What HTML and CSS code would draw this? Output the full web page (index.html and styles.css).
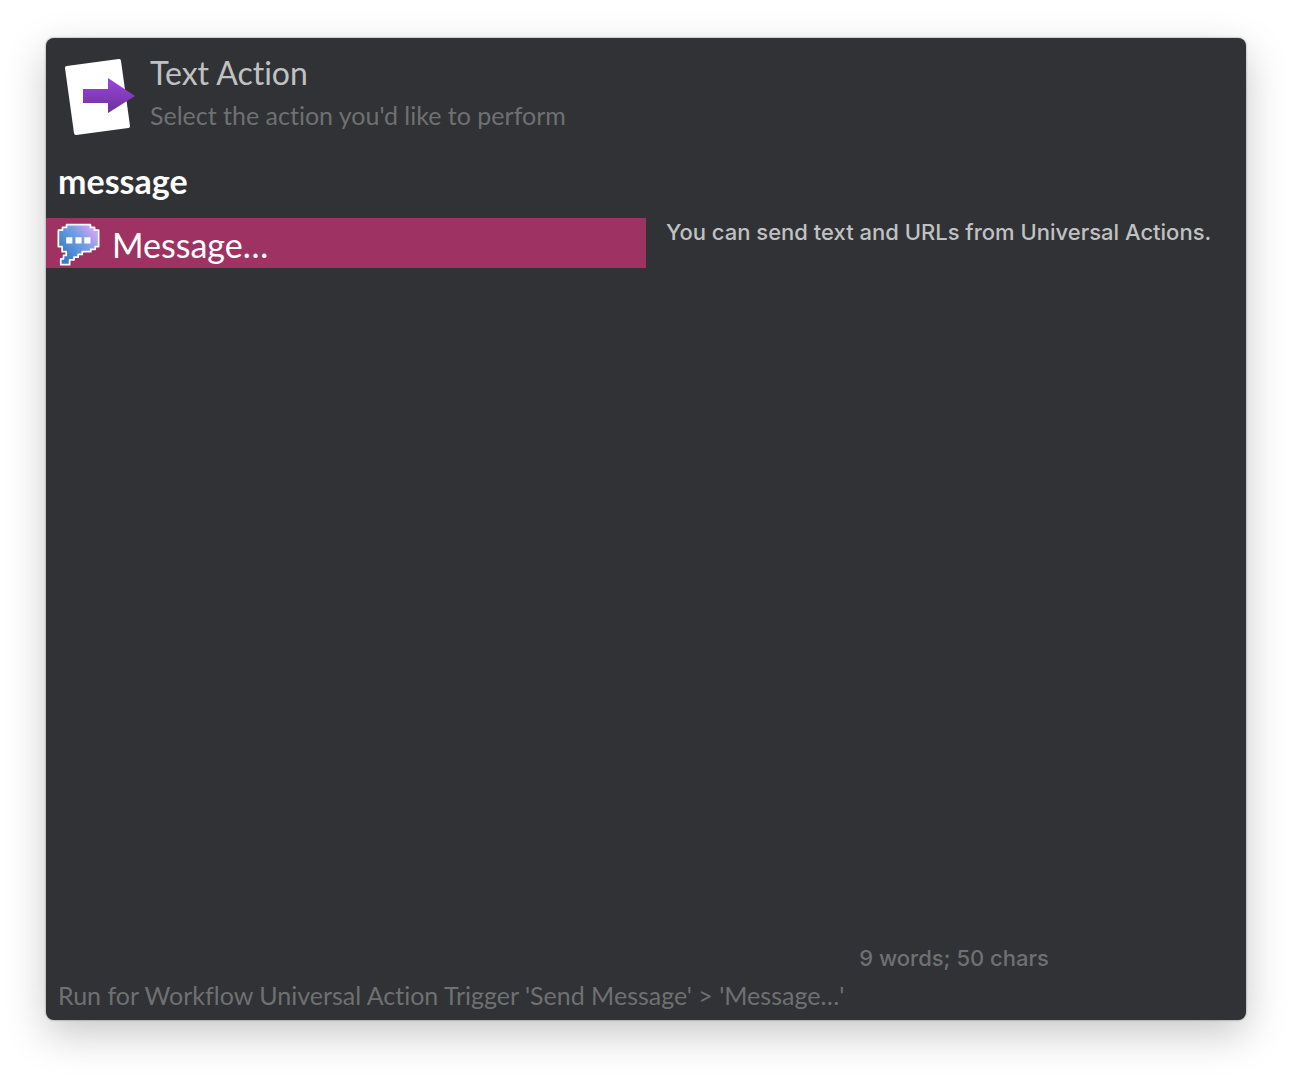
FILE: index.html
```html
<!DOCTYPE html>
<html lang="en">

<head>
    <meta charset="UTF-8">
    <meta name="viewport" content="width=device-width, initial-scale=1.0">
    <title>Text Action</title>
    <link rel="stylesheet" href="styles.css">
</head>

<body>
    <main class="window">
        <header class="header">
            <svg class="action-icon" viewBox="0 0 72 78" aria-hidden="true">
                <defs>
                    <linearGradient id="arrowFill" x1="0" y1="0" x2="0" y2="1">
                        <stop offset="0" stop-color="#9b45e0" />
                        <stop offset="1" stop-color="#6c3197" />
                    </linearGradient>
                </defs>
                <path class="sheet" d="M3 9 L55 2 L64 67 L12 74 Z" />
                <path fill="url(#arrowFill)" d="M19 30 H44 V19 L71 37 L44 54 V44 H19 Z" />
            </svg>
            <div>
                <h1>Text Action</h1>
                <p>Select the action you'd like to perform</p>
            </div>
        </header>

        <input class="search" type="text" value="message" aria-label="Search actions">

        <div class="content">
            <ul class="results">
                <li>
                    <button class="result" type="button">
                        <svg class="result-icon" viewBox="0 0 126 126" aria-hidden="true">
                            <defs>
                                <linearGradient id="bubbleFill" x1="0.1" y1="0.8" x2="0.9" y2="0.2">
                                    <stop offset="0" stop-color="#357bc8" />
                                    <stop offset="0.55" stop-color="#6a9ce3" />
                                    <stop offset="1" stop-color="#c9a3f2" />
                                </linearGradient>
                            </defs>
                            <path class="bubble" fill="url(#bubbleFill)" d="M28 5 H98 V13 H110 V21 H122 V69 H112 V77 H99 V84 H74 V92 H62 V100 H50 V108 H37 V122 H11 V105 H19 V95 H27 V84 H15 V69 H4 V21 H16 V13 H28 Z" />
                            <path fill="#fff" d="M27 42 h18 v18 h-18 Z M54 42 h18 v18 h-18 Z M80 42 h18 v18 h-18 Z" />
                        </svg>
                        Message…
                    </button>
                </li>
            </ul>
            <section class="preview">
                <p>You can send text and URLs from Universal Actions.</p>
                <p class="count">9 words; 50 chars</p>
            </section>
        </div>

        <footer class="status">Run for Workflow Universal Action Trigger 'Send Message' &gt; 'Message…'</footer>
    </main>
</body>

</html>
```
FILE: styles.css
```css
* {
    box-sizing: border-box;
}

body {
    margin: 0;
    min-height: 100vh;
    padding: 38px 46px 54px;
    display: flex;
    background-color: white;
    color: #c0c1c2;
    font-family: Lato, sans-serif;
    font-variant-ligatures: none;
}

h1,
p,
ul {
    margin: 0;
    padding: 0;
}

.window {
    flex: 1;
    display: flex;
    flex-direction: column;
    background-color: #303235;
    border-radius: 8px;
    box-shadow: 0 0 2px rgba(0, 0, 0, 0.5), 0 14px 40px rgba(0, 0, 0, 0.22);
}

.header {
    display: flex;
    gap: 14px;
    padding: 15px 18px 0;
    height: 118px;
}

.action-icon {
    width: 72px;
    height: 78px;
    margin-top: 6px;
}

.sheet {
    fill: white;
    stroke: white;
    stroke-width: 4;
    stroke-linejoin: round;
}

.header h1 {
    font-size: 32px;
    font-weight: normal;
    line-height: 40px;
}

.header p {
    font-size: 25px;
    line-height: 44px;
    color: #6f7072;
}

.search {
    height: 48px;
    margin-bottom: 14px;
    padding: 0 12px;
    border: none;
    outline: none;
    background: none;
    color: white;
    font: bold 34px Lato, sans-serif;
}

.content {
    flex: 1;
    display: grid;
    grid-template-columns: 1fr 1fr;
}

.results {
    list-style: none;
}

.result {
    width: 100%;
    height: 50px;
    display: flex;
    align-items: center;
    gap: 12px;
    padding: 2px 11px 0;
    border: none;
    background-color: #9e3363;
    color: white;
    font: 34px Lato, sans-serif;
}

.result-icon {
    width: 43px;
    height: 43px;
}

.bubble {
    stroke: white;
    stroke-width: 5;
    stroke-linejoin: round;
}

.preview {
    display: flex;
    flex-direction: column;
    justify-content: space-between;
    padding: 0 4px 0 20px;
    font-family: Inter, sans-serif;
    font-size: 22px;
    font-weight: 500;
    line-height: 28px;
}

.count {
    text-align: center;
    color: #6f7072;
}

.status {
    padding: 6px 12px 8px;
    font-size: 25px;
    line-height: 34px;
    color: #6f7072;
}
```
